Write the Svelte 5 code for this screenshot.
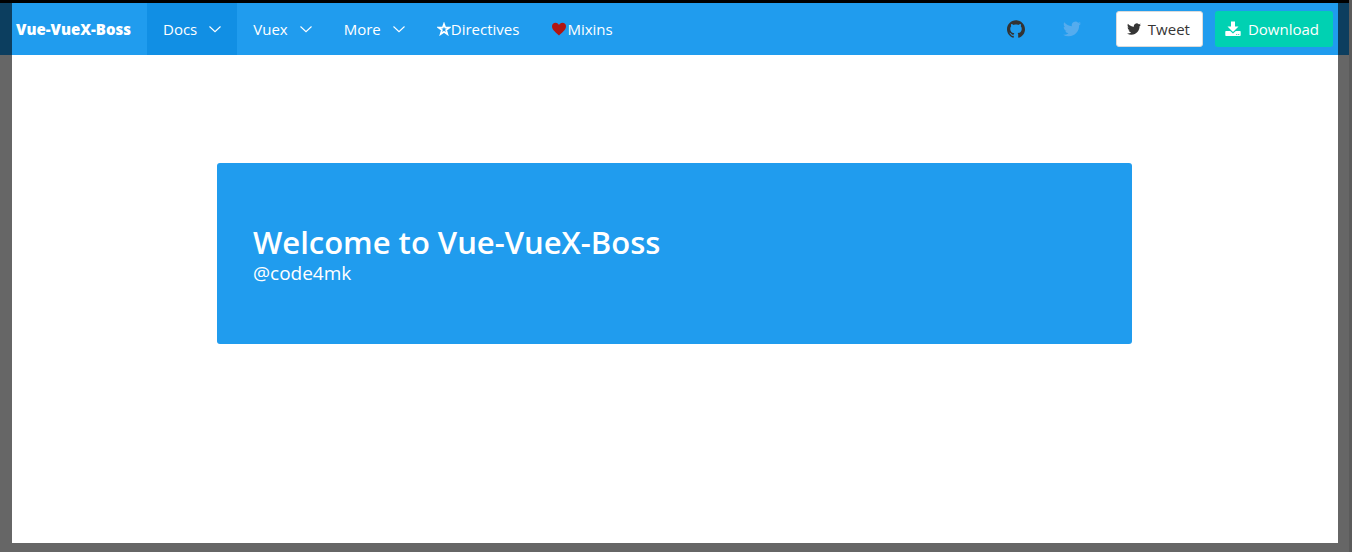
<script>
  const menus = [
    { label: 'Docs', active: true },
    { label: 'Vuex', active: false },
    { label: 'More', active: false }
  ];
</script>

{#snippet bird()}
  <svg class="icon" viewBox="0 0 24 24" aria-hidden="true">
    <path fill="currentColor" d="M23.953 4.57a10 10 0 01-2.825.775 4.958 4.958 0 002.163-2.723c-.951.555-2.005.959-3.127 1.184a4.92 4.92 0 00-8.384 4.482C7.69 8.095 4.067 6.13 1.64 3.162a4.822 4.822 0 00-.666 2.475c0 1.71.87 3.213 2.188 4.096a4.904 4.904 0 01-2.228-.616v.06a4.923 4.923 0 003.946 4.827 4.996 4.996 0 01-2.212.085 4.936 4.936 0 004.604 3.417 9.867 9.867 0 01-6.102 2.105c-.39 0-.779-.023-1.17-.067a13.995 13.995 0 007.557 2.209c9.053 0 13.998-7.496 13.998-13.985 0-.21 0-.42-.015-.63A9.935 9.935 0 0024 4.59z" />
  </svg>
{/snippet}

<div class="screen">
  <div class="page">
    <nav class="navbar" aria-label="Main">
      <a class="item brand" href="#home">Vue-VueX-Boss</a>
      {#each menus as menu}
        <button class="item menu" class:active={menu.active} type="button" aria-haspopup="true">
          {menu.label}
          <svg class="chevron" viewBox="0 0 12 8" aria-hidden="true">
            <path d="M0.500 1.500l5.500 5.200 5.500-5.200" fill="none" stroke="currentColor" stroke-width="1.100" />
          </svg>
        </button>
      {/each}
      <a class="item" href="#directives">
        <svg class="star" viewBox="0 0 14 14" aria-hidden="true">
          <path d="M7 2l1.300 3.700h4L9.100 8.100l1.200 4L7 9.800l-3.300 2.300 1.200-4L1.700 5.700h4z" fill="none" stroke="currentColor" stroke-width="1.700" />
        </svg>Directives
      </a>
      <a class="item" href="#mixins">
        <svg class="heart" viewBox="0 0 16 14" aria-hidden="true">
          <path d="M8 13.500C5.500 10.800 1 8.200 1 4.300 1 2 2.500.7 4.500.7 6.200.7 7.500 1.700 8 3 8.500 1.700 9.800.7 11.500.7 13.500.7 15 2 15 4.300c0 3.900-4.500 6.500-7 9.200z" fill="#b11512" />
        </svg>Mixins
      </a>

      <div class="end">
        <a class="social github" href="#github" aria-label="GitHub">
          <svg class="icon" viewBox="0 0 24 24" aria-hidden="true">
            <path fill="currentColor" d="M12 .297c-6.630 0-12 5.373-12 12 0 5.303 3.438 9.800 8.205 11.385.6.113.82-.258.82-.577 0-.285-.010-1.040-.015-2.040-3.338.724-4.042-1.610-4.042-1.610C4.422 18.070 3.633 17.700 3.633 17.700c-1.087-.744.084-.729.084-.729 1.205.084 1.838 1.236 1.838 1.236 1.070 1.835 2.809 1.305 3.495.998.108-.776.417-1.305.76-1.605-2.665-.3-5.466-1.332-5.466-5.930 0-1.310.465-2.380 1.235-3.220-.135-.303-.54-1.523.105-3.176 0 0 1.005-.322 3.300 1.230.96-.267 1.980-.399 3-.405 1.020.006 2.040.138 3 .405 2.280-1.552 3.285-1.230 3.285-1.230.645 1.653.24 2.873.12 3.176.765.840 1.230 1.910 1.230 3.220 0 4.610-2.805 5.625-5.475 5.920.42.360.81 1.096.81 2.220 0 1.606-.015 2.896-.015 3.286 0 .315.210.69.825.57C20.565 22.092 24 17.592 24 12.297c0-6.627-5.373-12-12-12" />
          </svg>
        </a>
        <a class="social twitter" href="#twitter" aria-label="Twitter">{@render bird()}</a>
        <a class="button tweet" href="#tweet">{@render bird()}Tweet</a>
        <a class="button download" href="#download">
          <svg class="icon" viewBox="0 0 16 16" aria-hidden="true">
            <path fill="currentColor" fill-rule="evenodd" d="M6 0.500h4v5h3.500L8 11 2.500 5.500H6zM1 10h4.200L8 12.600 10.800 10H15q.7 0 .7.700v3.600q0 .7-.7.700H1q-.7 0-.7-.7v-3.600q0-.7.7-.7zM11.300 13v.9h.9V13zM13.300 13v.9h.9V13z" />
          </svg>Download
        </a>
      </div>
    </nav>

    <main>
      <section class="hero">
        <h1>Welcome to Vue-VueX-Boss</h1>
        <p>@code4mk</p>
      </section>
    </main>
    <div class="shade"></div>
  </div>
</div>

<style>
  :global(body) {
    margin: 0;
    background: #fff;
  }

  .screen {
    box-sizing: border-box;
    min-height: 100vh;
    display: flex;
    border-right: 3px solid #5b5b5b;
    font-family: "Open Sans", "Noto Sans", sans-serif;
    font-size: 15px;
    line-height: 24px;
    color: #fff;
  }

  .page {
    position: relative;
    flex: 1;
    min-width: 0;
    border-top: 3px solid #000;
  }

  .shade {
    position: absolute;
    inset: 0;
    border: solid rgba(0, 0, 0, 0.6);
    border-width: 0 11px 9px 12px;
    pointer-events: none;
  }

  .navbar {
    display: flex;
    min-height: 52px;
    background: #209cee;
  }

  .item {
    display: flex;
    align-items: center;
    padding: 0 16px;
    border: 0;
    background: none;
    color: inherit;
    font: inherit;
    text-decoration: none;
    white-space: nowrap;
  }

  .brand {
    font-weight: 800;
  }

  .menu {
    gap: 12px;
  }

  .active {
    background: #118fe4;
  }

  .chevron {
    width: 12px;
    height: 8px;
  }

  .star,
  .heart {
    width: 14px;
    height: 14px;
  }

  .heart {
    width: 16px;
  }

  .end {
    display: flex;
    align-items: center;
    gap: 12px;
    margin-left: auto;
    padding-right: 16px;
  }

  .icon {
    width: 18px;
    height: 18px;
    flex: none;
  }

  .social {
    display: flex;
    padding: 0 13px;
  }

  .github {
    color: #333;
  }

  .twitter {
    color: #55acee;
    margin-right: 10px;
  }

  .button {
    box-sizing: border-box;
    display: flex;
    align-items: center;
    gap: 7px;
    height: 36px;
    padding: 0 12px 0 9px;
    border: 1px solid transparent;
    border-radius: 3px;
    color: #fff;
    text-decoration: none;
  }

  .button .icon {
    width: 16px;
    height: 16px;
  }

  .tweet {
    padding: 0 12px 0 10px;
    background: #fff;
    border-color: #dbdbdb;
    color: #363636;
  }

  .tweet .icon {
    width: 14px;
    height: 14px;
  }

  .download {
    padding-right: 13px;
    background: #00d1b2;
  }

  main {
    padding: 108px 217px;
  }

  .hero {
    padding: 60px 36px 58px;
    border-radius: 3px;
    background: #209cee;
  }

  h1 {
    margin: 0;
    font-size: 31px;
    font-weight: 600;
    line-height: 38px;
  }

  p {
    margin: 0;
    font-size: 19px;
    line-height: 25px;
  }
</style>
